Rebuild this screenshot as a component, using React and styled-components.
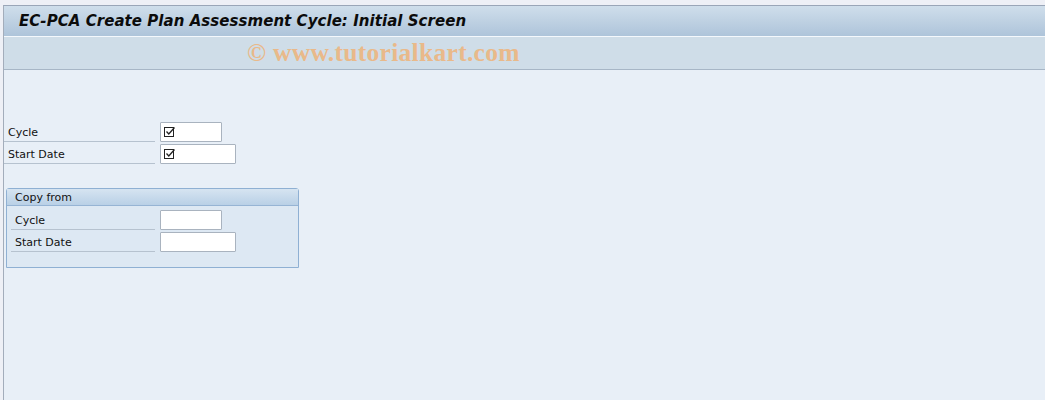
import styled, { createGlobalStyle } from "styled-components";

const Global = createGlobalStyle`
  html, body { margin: 0; padding: 0; }
  body { background: #eef0f6; font-family: "DejaVu Sans", Tahoma, sans-serif; }
`;

const Screen = styled.div`
  width: 1045px;
  height: 400px;
  padding-top: 5px;
  box-sizing: border-box;
  background: #eef0f6;
  overflow: hidden;
`;

const Frame = styled.div`
  margin-left: 3px;
  height: 395px;
  border-left: 1px solid #a3adbb;
  border-top: 1px solid #9aa6b8;
  background: #e8eff7;
  display: flex;
  flex-direction: column;
`;

const TitleBar = styled.div`
  height: 30px;
  background: linear-gradient(#cfdeeb, #aec4da);
  border-bottom: 1px solid #f4f8fc;
  display: flex;
  align-items: center;
  padding-left: 15px;
`;

const Title = styled.h1`
  margin: 0;
  font-family: "DejaVu Sans", Tahoma, sans-serif;
  font-size: 15px;
  font-weight: bold;
  font-style: italic;
  color: #0b0b0b;
  letter-spacing: 0.05px;
`;

const Toolbar = styled.div`
  height: 32px;
  background: #cfdde8;
  border-bottom: 1px solid #a7b6c6;
  display: flex;
  align-items: center;
  padding-left: 243px;
`;

const Watermark = styled.span`
  font-family: "Liberation Serif", serif;
  font-weight: bold;
  font-size: 25.5px;
  color: #e9b98a;
  letter-spacing: 0.3px;
`;

const Content = styled.div`
  padding: 52px 0 0 0;
  flex: 1;
`;

const Form = styled.div`
  display: flex;
  flex-direction: column;
  gap: 2px;
  width: 232px;
`;

const Row = styled.div`
  display: flex;
  align-items: center;
  height: 20px;
`;

const Label = styled.div`
  width: ${({ w }) => w}px;
  height: 20px;
  box-sizing: border-box;
  padding-left: 4px;
  padding-top: 4px;
  border-bottom: 1px solid #b6c2cf;
  font-size: 11px;
  color: #111;
  margin-right: 5px;
`;

const Input = styled.div`
  width: ${({ w }) => w}px;
  height: 20px;
  box-sizing: border-box;
  background: #fff;
  border: 1px solid #a9b3bf;
  border-radius: 1px;
  display: flex;
  align-items: center;
  padding-left: 3px;
`;

const Group = styled.div`
  margin: 24px 0 0 2px;
  width: 293px;
  height: 80px;
  box-sizing: border-box;
  border: 1px solid #8fb0d3;
  border-radius: 3px 3px 0 0;
  background: #dde8f3;
`;

const GroupHead = styled.div`
  height: 16px;
  background: linear-gradient(#d6e4f1, #b9d0e6);
  border-bottom: 1px solid #96b4d4;
  font-size: 11px;
  color: #111;
  padding-left: 8px;
  line-height: 17px;
`;

const GroupBody = styled.div`
  padding: 4px 0 0 4px;
`;

const Check = () => (
  <svg width="12" height="12" viewBox="0 0 12 12">
    <rect x="0.5" y="1.5" width="9" height="9" fill="none" stroke="#222" strokeWidth="1" />
    <path d="M2.5 5.5 L4.8 8 L10.5 1.5" fill="none" stroke="#222" strokeWidth="1.3" />
  </svg>
);

const Field = ({ label, w, lw, check }) => (
  <Row>
    <Label w={lw}>{label}</Label>
    <Input w={w}>{check && <Check />}</Input>
  </Row>
);

export default function App() {
  return (
    <Screen>
      <Global />
      <Frame>
        <TitleBar>
          <Title>EC-PCA Create Plan Assessment Cycle: Initial Screen</Title>
        </TitleBar>
        <Toolbar>
          <Watermark>© www.tutorialkart.com</Watermark>
        </Toolbar>
        <Content>
          <Form>
            <Field label="Cycle" lw={151} w={62} check />
            <Field label="Start Date" lw={151} w={76} check />
          </Form>
          <Group>
            <GroupHead>Copy from</GroupHead>
            <GroupBody>
              <Form>
                <Field label="Cycle" lw={144} w={62} />
                <Field label="Start Date" lw={144} w={76} />
              </Form>
            </GroupBody>
          </Group>
        </Content>
      </Frame>
    </Screen>
  );
}
